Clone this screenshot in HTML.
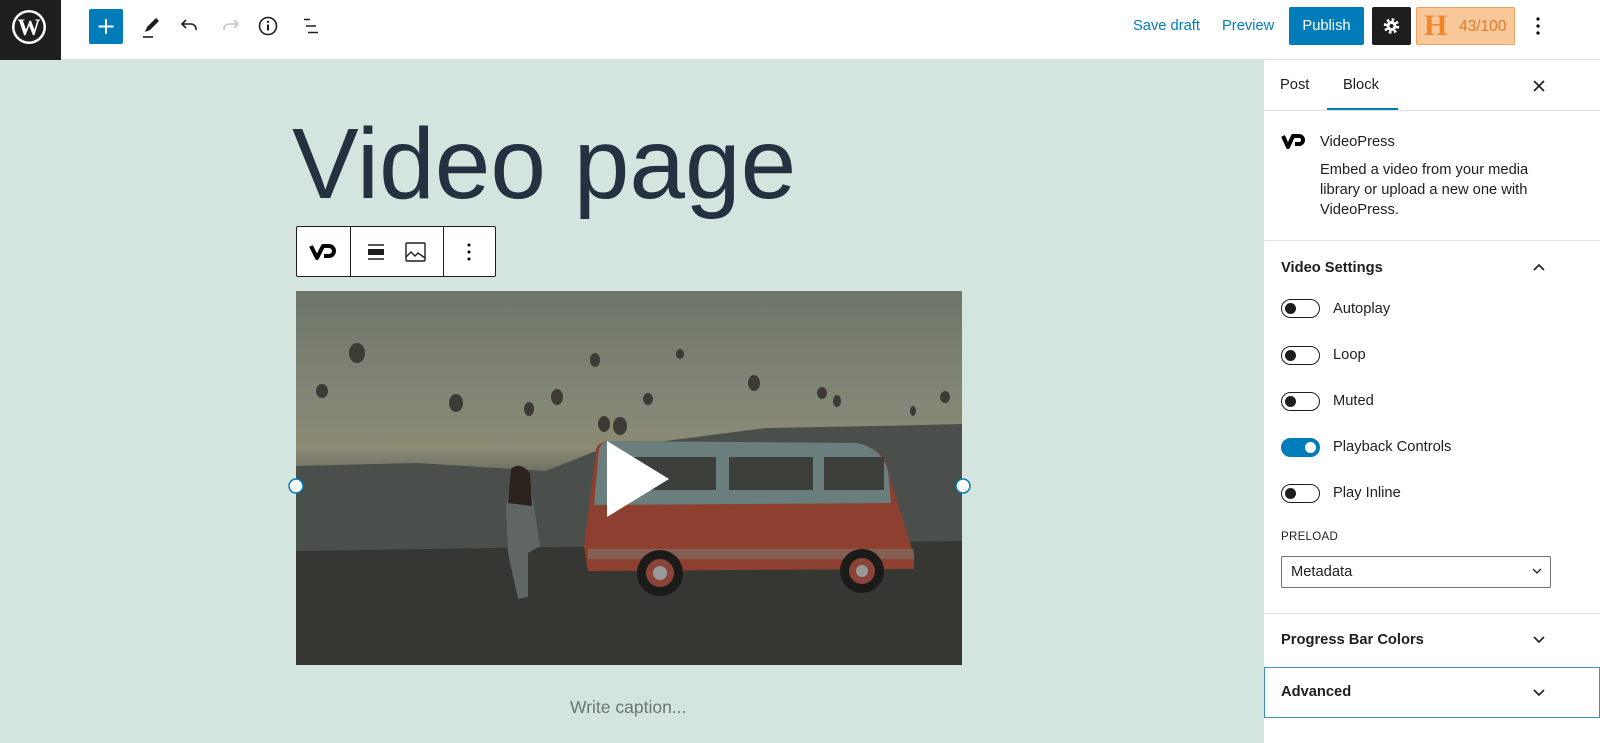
<!DOCTYPE html>
<html><head><meta charset="utf-8"><style>
*{box-sizing:border-box;margin:0;padding:0}
body{width:1600px;height:743px;overflow:hidden;font-family:"Liberation Sans",sans-serif;background:#d4e5df;position:relative;color:#1e1e1e}
.top{position:absolute;left:0;top:0;width:1600px;height:60px;background:#fff;border-bottom:1px solid #e0e0e0}
.wp{position:absolute;left:0;top:0;width:61px;height:60px;background:#1e1e1e}
.abs{position:absolute}
.side{position:absolute;left:1263px;top:60px;width:337px;height:683px;background:#fff;border-left:1px solid #e0e0e0}
.tog{position:absolute;left:1281px;width:39px;height:19px;border:1.5px solid #1e1e1e;border-radius:10px;background:#fff}
.tog::after{content:"";position:absolute;left:3px;top:3px;width:11px;height:11px;border-radius:50%;background:#1e1e1e}
.tog.on{background:#007cba;border-color:#007cba}
.tog.on::after{left:auto;right:3px;background:#fff}
.lbl{position:absolute;left:1333px;font-size:14.7px;color:#1e1e1e}
.hr{position:absolute;left:1264px;width:336px;height:1px;background:#e0e0e0}
.sec{position:absolute;left:1281px;font-size:14.7px;font-weight:bold;color:#1e1e1e}
</style></head><body>
<div class="top"></div>
<div class="wp"><svg width="61" height="60" viewBox="0 0 61 60"><circle cx="29" cy="27" r="17" fill="#fff"/><circle cx="29" cy="27" r="14.5" fill="#1e1e1e"/><text x="29" y="35" text-anchor="middle" font-family="Liberation Serif" font-weight="bold" font-size="23" fill="#fff">W</text></svg></div>
<div class="abs" style="left:89px;top:9px;width:34px;height:35px;background:#007cba;border-radius:2px"><svg width="34" height="35"><path d="M17 10v15M9.5 17.5h15" stroke="#fff" stroke-width="2"/></svg></div>
<svg class="abs" style="left:138px;top:12px" width="26" height="28"><path d="M7 20l2-5 9-9 3 3-9 9z" fill="#1e1e1e"/><path d="M5 25h10" stroke="#1e1e1e" stroke-width="1.6"/></svg>
<svg class="abs" style="left:178px;top:14px" width="24" height="24"><path d="M8 6l-4 4 4 4M4 10h9a5 5 0 0 1 5 5v1" fill="none" stroke="#1e1e1e" stroke-width="1.6"/></svg>
<svg class="abs" style="left:218px;top:14px" width="24" height="24"><path d="M16 6l4 4-4 4M20 10h-9a5 5 0 0 0-5 5v1" fill="none" stroke="#c4c4c4" stroke-width="1.6"/></svg>
<svg class="abs" style="left:256px;top:14px" width="24" height="24"><circle cx="12" cy="12" r="8.5" fill="none" stroke="#1e1e1e" stroke-width="1.6"/><path d="M12 10.5v6" stroke="#1e1e1e" stroke-width="2"/><circle cx="12" cy="7.8" r="1.2" fill="#1e1e1e"/></svg>
<svg class="abs" style="left:296px;top:14px" width="26" height="24"><path d="M8 5.5h6M10 12h10M12 18.5h10" stroke="#1e1e1e" stroke-width="1.6"/></svg>
<div class="abs" style="left:1133px;top:18px;font-size:14.7px;color:#007cba">Save draft</div>
<div class="abs" style="left:1222px;top:18px;font-size:14.7px;color:#007cba">Preview</div>
<div class="abs" style="left:1289px;top:7px;width:75px;height:38px;background:#007cba;border-radius:2px;color:#fff;font-size:14.7px;text-align:center;line-height:38px">Publish</div>
<div class="abs" style="left:1372px;top:7px;width:39px;height:38px;background:#1e1e1e;border-radius:2px"><svg width="39" height="38"><g transform="translate(19.5 19)"><circle r="6" fill="none" stroke="#fff" stroke-width="3.5" stroke-dasharray="2.4 2.3"/><circle r="5" fill="#fff"/><circle r="2" fill="#1e1e1e"/></g></svg></div>
<div class="abs" style="left:1416px;top:7px;width:99px;height:38px;background:#f8c89a;border:1px solid #f0a060;border-radius:2px"><span style="position:absolute;left:7px;top:1px;font-family:'Liberation Serif';font-weight:bold;font-size:30px;color:#f0852a">H</span><span style="position:absolute;left:42px;top:10px;font-size:15.5px;color:#e07b28">43/100</span></div>
<svg class="abs" style="left:1530px;top:14px" width="16" height="24"><circle cx="8" cy="5" r="1.6"/><circle cx="8" cy="12" r="1.6"/><circle cx="8" cy="19" r="1.6"/></svg>

<div class="abs" style="left:292px;top:107px;font-size:100px;line-height:115px;color:#253040;white-space:nowrap">Video page</div>

<div class="abs" style="left:296px;top:226px;width:200px;height:51px;background:#fff;border:1px solid #1e1e1e;border-radius:2px">
<div class="abs" style="left:53px;top:0;width:1px;height:49px;background:#1e1e1e"></div>
<div class="abs" style="left:146px;top:0;width:1px;height:49px;background:#1e1e1e"></div>
<svg class="abs" style="left:12px;top:14px" width="28" height="22"><path d="M2 5l6 12 6-12h6a5 5 0 0 1 0 10h-5" fill="none" stroke="#000" stroke-width="4" stroke-linejoin="round"/></svg>
<svg class="abs" style="left:68px;top:14px" width="24" height="22"><path d="M3 4h16M3 18h16" stroke="#1e1e1e" stroke-width="1.5"/><rect x="3" y="8" width="16" height="6" fill="#1e1e1e"/></svg>
<svg class="abs" style="left:107px;top:14px" width="24" height="22"><rect x="2" y="2" width="19" height="18" rx="1" fill="none" stroke="#1e1e1e" stroke-width="1.4"/><path d="M2 16l5-5 4 4 3-3 7 5" fill="none" stroke="#1e1e1e" stroke-width="1.4"/></svg>
<svg class="abs" style="left:166px;top:14px" width="12" height="22"><circle cx="6" cy="4" r="1.5"/><circle cx="6" cy="11" r="1.5"/><circle cx="6" cy="18" r="1.5"/></svg>
</div>

<svg class="abs" style="left:296px;top:291px" width="666" height="374">
<defs><linearGradient id="sky" x1="0" y1="0" x2="0" y2="1"><stop offset="0" stop-color="#6e7569"/><stop offset=".3" stop-color="#838776"/><stop offset=".42" stop-color="#8c8b74"/><stop offset=".55" stop-color="#4e5350"/><stop offset=".8" stop-color="#3c3d39"/><stop offset="1" stop-color="#2e2e2c"/></linearGradient></defs>
<rect width="666" height="374" fill="url(#sky)"/>
<path d="M0 175 L120 172 L250 180 L300 160 L330 155 L470 137 L580 135 L666 133 L666 374 L0 374Z" fill="#4a4f4b"/>
<path d="M0 260 L666 250 L666 374 L0 374Z" fill="#363633"/>
<g fill="#3e3a36"><ellipse cx="61" cy="62" rx="8" ry="10"/><ellipse cx="26" cy="100" rx="6" ry="7"/><ellipse cx="160" cy="112" rx="7" ry="9"/><ellipse cx="233" cy="118" rx="5" ry="7"/><ellipse cx="261" cy="106" rx="6" ry="8"/><ellipse cx="299" cy="69" rx="5" ry="7"/><ellipse cx="384" cy="63" rx="4" ry="5"/><ellipse cx="352" cy="108" rx="5" ry="6"/><ellipse cx="458" cy="92" rx="6" ry="8"/><ellipse cx="526" cy="102" rx="5" ry="6"/><ellipse cx="649" cy="106" rx="5" ry="6"/><ellipse cx="308" cy="133" rx="6" ry="8"/><ellipse cx="324" cy="135" rx="7" ry="9"/><ellipse cx="541" cy="110" rx="4" ry="6"/><ellipse cx="617" cy="120" rx="3" ry="5"/></g>
<path d="M300 160 Q300 152 312 150 L560 152 Q590 158 592 180 L618 265 L618 278 L292 280 L288 255Z" fill="#8e4030"/>
<path d="M303 158 Q305 152 312 150 L560 152 Q585 156 592 180 L595 212 L298 214Z" fill="#6a7f7d"/>
<g fill="#3d3f3b"><rect x="320" y="166" width="100" height="33"/><rect x="433" y="166" width="84" height="33"/><rect x="528" y="166" width="60" height="33"/></g>
<rect x="292" y="258" width="326" height="10" fill="#7d7e76" opacity=".5"/>
<g><circle cx="364" cy="282" r="23" fill="#1b1b1a"/><circle cx="364" cy="282" r="14" fill="#8a4538"/><circle cx="364" cy="282" r="7" fill="#999"/><circle cx="566" cy="280" r="22" fill="#1b1b1a"/><circle cx="566" cy="280" r="13" fill="#8a4538"/><circle cx="566" cy="280" r="6" fill="#999"/></g>
<path d="M218 178 Q226 172 232 180 L238 215 L244 255 L232 262 L232 306 L222 308 L212 262 L210 215Z" fill="#5f6664"/>
<path d="M215 178 Q224 170 234 182 L236 215 L212 212Z" fill="#2b211d"/>
<path d="M311 150 L373 188 L311 226Z" fill="#fff"/>
</svg>
<svg class="abs" style="left:286px;top:476px" width="690" height="20"><circle cx="10" cy="10" r="7" fill="#fff" stroke="#007cba" stroke-width="1.5"/><circle cx="677" cy="10" r="7" fill="#fff" stroke="#007cba" stroke-width="1.5"/></svg>
<div class="abs" style="left:570px;top:697px;font-size:17.5px;color:#6b7570">Write caption...</div>

<div class="side"></div>
<div class="abs" style="left:1280px;top:77px;font-size:14.7px">Post</div>
<div class="abs" style="left:1343px;top:77px;font-size:14.7px">Block</div>
<div class="abs" style="left:1327px;top:108px;width:71px;height:3px;background:#007cba"></div>
<div class="hr" style="top:110px"></div>
<svg class="abs" style="left:1531px;top:78px" width="16" height="16"><path d="M3 3l10 10M13 3L3 13" stroke="#1e1e1e" stroke-width="1.6"/></svg>
<svg class="abs" style="left:1280px;top:132px" width="28" height="20"><path d="M3 4l5 11 5-11h6a4 4 0 0 1 0 8h-4" fill="none" stroke="#000" stroke-width="4" stroke-linejoin="round"/></svg>
<div class="abs" style="left:1320px;top:134px;font-size:14.7px">VideoPress</div>
<div class="abs" style="left:1320px;top:160px;font-size:14.7px;line-height:20px;color:#1e1e1e;width:240px">Embed a video from your media library or upload a new one with VideoPress.</div>
<div class="hr" style="top:240px"></div>
<div class="sec" style="top:260px">Video Settings</div>
<svg class="abs" style="left:1531px;top:261px" width="16" height="12"><path d="M3 9l5-5 5 5" fill="none" stroke="#1e1e1e" stroke-width="1.6"/></svg>
<div class="tog" style="top:299px"></div><div class="lbl" style="top:301px">Autoplay</div>
<div class="tog" style="top:346px"></div><div class="lbl" style="top:347px">Loop</div>
<div class="tog" style="top:392px"></div><div class="lbl" style="top:393px">Muted</div>
<div class="tog on" style="top:438px"></div><div class="lbl" style="top:439px">Playback Controls</div>
<div class="tog" style="top:484px"></div><div class="lbl" style="top:485px">Play Inline</div>
<div class="abs" style="left:1281px;top:531px;font-size:11.5px;color:#1e1e1e;letter-spacing:.3px">PRELOAD</div>
<div class="abs" style="left:1281px;top:556px;width:270px;height:32px;border:1px solid #757575;border-radius:2px;font-size:14.7px;padding:7px 0 0 9px">Metadata</div>
<svg class="abs" style="left:1531px;top:566px" width="12" height="10"><path d="M2 3l4 4 4-4" fill="none" stroke="#1e1e1e" stroke-width="1.3"/></svg>
<div class="hr" style="top:613px"></div>
<div class="sec" style="top:632px">Progress Bar Colors</div>
<svg class="abs" style="left:1531px;top:634px" width="16" height="12"><path d="M3 3l5 5 5-5" fill="none" stroke="#1e1e1e" stroke-width="1.6"/></svg>
<div class="abs" style="left:1264px;top:667px;width:336px;height:51px;border:1.5px solid #3a8fc8"></div>
<div class="sec" style="top:684px">Advanced</div>
<svg class="abs" style="left:1531px;top:687px" width="16" height="12"><path d="M3 3l5 5 5-5" fill="none" stroke="#1e1e1e" stroke-width="1.6"/></svg>
</body></html>
